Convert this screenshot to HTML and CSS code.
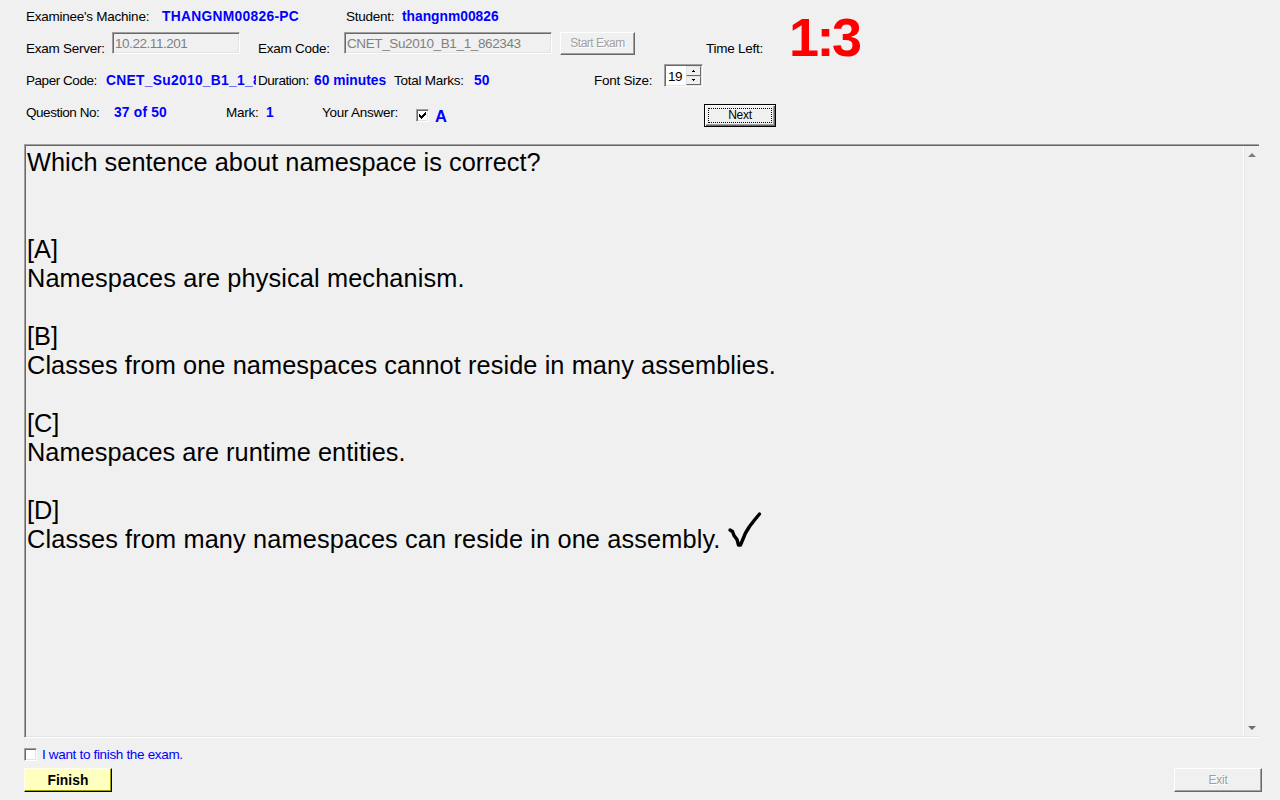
FILE: index.html
```html
<!DOCTYPE html>
<html lang="en">
<head>
<meta charset="utf-8">
<title>Exam</title>
<link rel="stylesheet" href="styles.css">
</head>
<body>
<main class="app">
  <header class="info">
    <div class="row row-machine">
      <span class="label">Examinee's Machine:</span>
      <span class="value machine">THANGNM00826-PC</span>
      <span class="label">Student:</span>
      <span class="value student">thangnm00826</span>
    </div>
    <div class="row row-server">
      <span class="label">Exam Server:</span>
      <span class="field field-server">10.22.11.201</span>
      <span class="label">Exam Code:</span>
      <span class="field field-code">CNET_Su2010_B1_1_862343</span>
      <span class="button disabled start">Start Exam</span>
      <span class="label">Time Left:</span>
      <span class="timer">1:3</span>
    </div>
    <div class="row row-paper">
      <span class="label tight">Paper Code:</span>
      <span class="value paper">CNET_Su2010_B1_1_862343</span>
      <span class="label tight">Duration:</span>
      <span class="value minutes">60 minutes</span>
      <span class="label">Total Marks:</span>
      <span class="value">50</span>
      <span class="label">Font Size:</span>
      <span class="spinner"><span class="number">19</span><span class="steps">
        <span class="step"><svg width="3" height="2" viewBox="0 0 3 2" shape-rendering="crispEdges"><path d="M1 0h1v1h1v1H0V1h1z"/></svg></span>
        <span class="step"><svg width="3" height="2" viewBox="0 0 3 2" shape-rendering="crispEdges"><path d="M0 0h3v1H2v1H1V1H0z"/></svg></span>
      </span></span>
    </div>
    <div class="row row-question">
      <span class="label tight">Question No:</span>
      <span class="value number-of">37 of 50</span>
      <span class="label">Mark:</span>
      <span class="value">1</span>
      <span class="label">Your Answer:</span>
      <span class="check answer-check"><svg width="7" height="7" viewBox="0 0 7 7" shape-rendering="crispEdges"><path d="M0 2h1v1h1v1h1V3h1V2h1V1h1V0h1v3H6v1H5v1H4v1H3v1H2V6H1V5H0z"/></svg></span>
      <span class="value answer">A</span>
      <span class="button next"><span class="focus">Next</span></span>
    </div>
  </header>
  <section class="paper-view">
    <div class="question">
      <p class="l1">Which sentence about namespace is correct?</p>
      <p></p>
      <p></p>
      <p>[A]</p>
      <p class="l2">Namespaces are physical mechanism.</p>
      <p></p>
      <p>[B]</p>
      <p class="l3">Classes from one namespaces cannot reside in many assemblies.</p>
      <p></p>
      <p>[C]</p>
      <p class="l4">Namespaces are runtime entities.</p>
      <p></p>
      <p>[D]</p>
      <p class="marked"><span class="l5">Classes from many namespaces can reside in one assembly.</span><svg class="tick" width="36" height="40" viewBox="0 0 36 40"><path d="M3 20l2.500 1.500 1.500 4 3 4 1.500 5.500h2l5-12 4-6.500 5-6.500 5-6" fill="none" stroke="#000" stroke-width="3.400" stroke-linecap="round" stroke-linejoin="round"/></svg></p>
    </div>
    <div class="scroll">
      <svg width="8" height="4" viewBox="0 0 8 4"><path d="M4 0l4 4H0z" fill="#7c7c7c"/></svg>
      <svg width="8" height="4" viewBox="0 0 8 4"><path d="M0 0h8L4 4z" fill="#6c6c6c"/></svg>
    </div>
  </section>
  <footer class="footer">
    <div class="confirm"><span class="check"></span><span class="confirm-text">I want to finish the exam.</span></div>
    <div class="actions">
      <span class="button finish">Finish</span>
      <span class="button disabled exit">Exit</span>
    </div>
  </footer>
</main>
</body>
</html>
```
FILE: styles.css
```css
* { box-sizing: border-box; }
body {
  margin: 0;
  background: #f0f0f0;
  color: #000;
  font: 13.5px/16px "Liberation Sans", Arial, sans-serif;
  letter-spacing: -.25px;
}
p { margin: 0; }
svg { display: block; }
.app { width: 1280px; height: 800px; overflow: hidden; display: flex; flex-direction: column; }
.info { height: 144px; padding-left: 26px; flex: none; }
.row { display: grid; height: 32px; padding-top: 9px; align-items: start; white-space: nowrap; }
.row-machine { grid-template-columns: 136px 184px 56px 200px; }
.row-server { grid-template-columns: 86px 146px 86px 216px 146px 83px 100px; }
.row-paper { grid-template-columns: 80px 152px 56px 80px 80px 120px 70px 40px; }
.row-question { grid-template-columns: 88px 112px 40px 56px 94px 19px 269px 72px; }
.tight { letter-spacing: -.45px; }
.value { color: #00f; font-weight: bold; font-size: 13.8px; letter-spacing: .1px; }
.machine { letter-spacing: .3px; }
.student { letter-spacing: 0; }
.minutes { letter-spacing: 0; }
.number-of { letter-spacing: .2px; }
.paper { width: 150px; overflow: hidden; letter-spacing: .3px; }
.answer { margin-top: -1px; font-size: 16.5px; line-height: 24px; }
.field {
  height: 22px;
  margin-top: -9px;
  padding-left: 2px;
  color: #808080;
  line-height: 21px;
  letter-spacing: -.45px;
  border: 1px solid;
  border-color: #a0a0a0 #fff #fff #a0a0a0;
  box-shadow: inset 1px 1px #696969, inset -1px -1px #e3e3e3;
}
.field-server { width: 128px; }
.field-code { width: 208px; letter-spacing: -.38px; }
.button {
  display: block;
  text-align: center;
  font-size: 12px;
  border: 1px solid;
  border-color: #fff #696969 #696969 #fff;
  box-shadow: inset -1px -1px #a0a0a0;
}
.disabled { color: #a0a0a0; text-shadow: 1px 1px #fff; }
.start { width: 75px; height: 23px; margin-top: -9px; line-height: 21px; letter-spacing: -.5px; }
.timer {
  height: 0;
  margin-top: -34px;
  color: #f00;
  font-weight: bold;
  font-size: 54px;
  line-height: 61px;
  letter-spacing: -2.5px;
}
.spinner {
  width: 39px;
  height: 23px;
  margin-top: -9px;
  padding: 1px;
  display: flex;
  background: #fff;
  border: 1px solid;
  border-color: #a0a0a0 #fff #fff #a0a0a0;
  box-shadow: inset 1px 1px #696969, inset -1px -1px #e3e3e3;
}
.number { width: 20px; padding-left: 2px; line-height: 21px; letter-spacing: -.5px; }
.steps { width: 15px; display: flex; flex-direction: column; }
.step {
  flex: 1;
  display: flex;
  align-items: center;
  justify-content: center;
  background: #f0f0f0;
  border: 1px solid;
  border-color: #e3e3e3 #696969 #696969 #e3e3e3;
}
.check {
  width: 13px;
  height: 13px;
  padding: 3px;
  background: #fff;
  border: 1px solid;
  border-color: #a0a0a0 #fff #fff #a0a0a0;
  box-shadow: inset 1px 1px #696969, inset -1px -1px #e3e3e3;
}
.check svg { margin: -1px; }
.answer-check { margin-top: 4px; }
.next {
  width: 72px;
  height: 23px;
  margin-top: -1px;
  padding: 2px;
  border-color: #000;
  box-shadow: inset 1px 1px #fff, inset -1px -1px #696969, inset -2px -2px #a0a0a0;
}
.focus { display: block; height: 15px; margin: 1px; line-height: 13px; border: 1px dotted #000; }
.paper-view {
  width: 1235px;
  height: 594px;
  margin-left: 24px;
  flex: none;
  display: flex;
  justify-content: space-between;
  border: 1px solid;
  border-color: #a0a0a0 transparent #fff #a0a0a0;
  border-right: 0;
  box-shadow: inset 1px 1px #696969, inset 0 -1px #e3e3e3;
}
.question {
  padding: 3px 0 0 2px;
  font-size: 25.33px;
  line-height: 29px;
  letter-spacing: 0;
  white-space: nowrap;
}
.question p { height: 29px; }
.l1 { letter-spacing: .03px; }
.l2 { letter-spacing: .12px; }
.l3 { letter-spacing: .09px; }
.l4 { letter-spacing: .04px; }
.l5 { letter-spacing: .125px; }
.marked { display: flex; }
.tick { margin: -15px 0 0 6px; }
.scroll {
  width: 16px;
  margin: 1px 0 2px;
  padding: 7px 3px 5px 4px;
  display: flex;
  flex-direction: column;
  justify-content: space-between;
  border-left: 1px solid #fff;
  box-shadow: inset 1px 0 #e6e6e6;
}
.footer { padding: 9px 18px 0 24px; }
.confirm { height: 21px; display: flex; color: #00f; letter-spacing: -.33px; }
.confirm .check { margin-top: 1px; }
.confirm-text { margin-left: 5px; }
.actions { display: flex; justify-content: space-between; }
.finish {
  width: 88px;
  height: 24px;
  background: #ffffc0;
  font-weight: bold;
  font-size: 13.8px;
  line-height: 23px;
  letter-spacing: .1px;
  border-color: #ffffe8 #000 #000 #ffffe8;
  box-shadow: inset -1px -1px #a0a000;
}
.exit { width: 88px; height: 24px; line-height: 22px; }
```
